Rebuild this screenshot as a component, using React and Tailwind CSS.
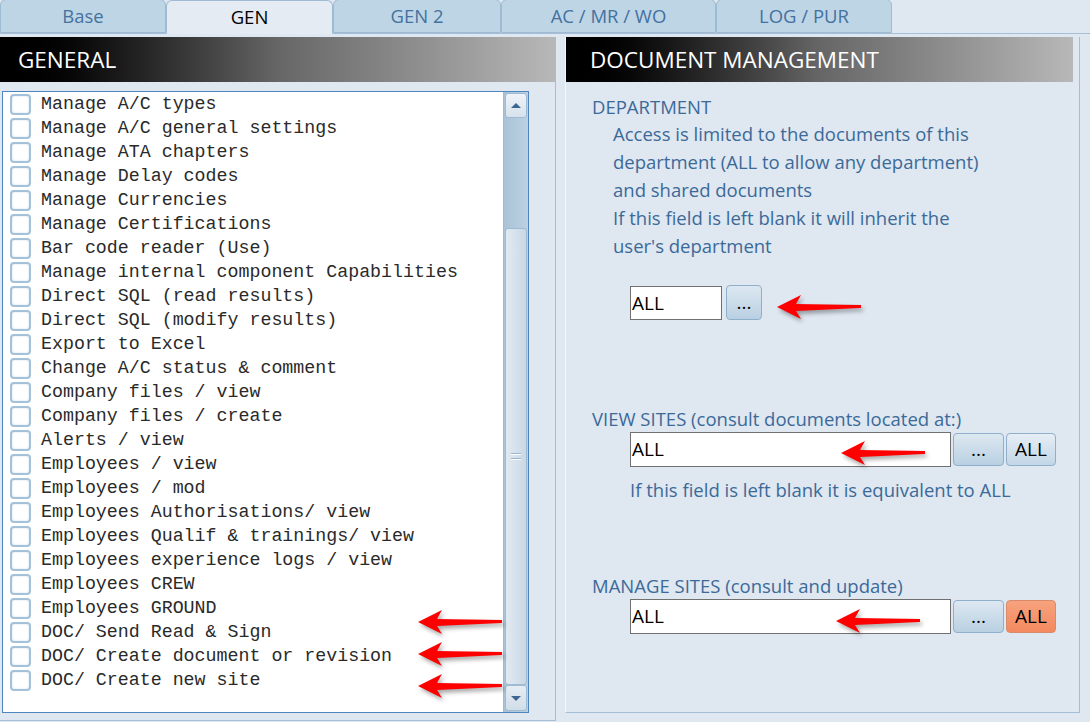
import React from "react";

const TABS = [
	{ label: "Base", width: "w-[166px]" },
	{ label: "GEN", width: "w-[167px]", active: true },
	{ label: "GEN 2", width: "w-[168px]" },
	{ label: "AC / MR / WO", width: "w-[215px]" },
	{ label: "LOG / PUR", width: "w-[176px]" },
];

const RIGHTS = [
	"Manage A/C types",
	"Manage A/C general settings",
	"Manage ATA chapters",
	"Manage Delay codes",
	"Manage Currencies",
	"Manage Certifications",
	"Bar code reader (Use)",
	"Manage internal component Capabilities",
	"Direct SQL (read results)",
	"Direct SQL (modify results)",
	"Export to Excel",
	"Change A/C status & comment",
	"Company files / view",
	"Company files / create",
	"Alerts / view",
	"Employees / view",
	"Employees / mod",
	"Employees Authorisations/ view",
	"Employees Qualif & trainings/ view",
	"Employees experience logs / view",
	"Employees CREW",
	"Employees GROUND",
	"DOC/ Send Read & Sign",
	"DOC/ Create document or revision",
	"DOC/ Create new site",
];

const UI_FONT = "font-['Open_Sans','Noto_Sans',sans-serif]";

// red pointer arrow, tip on the left
function Arrow({ className }) {
	return (
		<svg
			className={`absolute pointer-events-none drop-shadow-[2px_3px_2px_rgba(0,0,0,0.35)] ${className}`}
			width="84"
			height="26"
			viewBox="0 0 84 26"
		>
			<path d="M0 13 L24 1 L19 10 L84 11 L84 14 L19 17 L24 25 Z" fill="#ff0000" />
		</svg>
	);
}

function Tab({ label, width, active }) {
	return (
		<div
			className={`${width} h-[34px] flex items-center justify-center rounded-t-[6px] border border-[#9fbad3] text-[18.5px] ${UI_FONT} ${
				active
					? "bg-[#e4ebf3] text-black border-b-[#e4ebf3] -mb-px"
					: "bg-[#bed5e6] text-[#44729f] mt-px"
			}`}
		>
			{label}
		</div>
	);
}

function Header({ children }) {
	return (
		<div
			className={`h-[45px] flex items-center pl-[18px] text-white text-[22.5px] ${UI_FONT} bg-gradient-to-r from-black via-[#666666] to-[#b8b8b8]`}
		>
			{children}
		</div>
	);
}

function ScrollBar() {
	return (
		<div className="w-[25px] h-full flex flex-col bg-gradient-to-r from-[#aac3d8] to-[#bcd1e2] border-l border-[#9fbad3]">
			<div className="h-[25px] mx-px mt-px rounded-[3px] border border-[#9fbad3] bg-gradient-to-b from-[#eef3f8] to-[#d6e2ec] flex items-center justify-center">
				<div className="w-0 h-0 border-x-[5px] border-x-transparent border-b-[5px] border-b-[#3d6690]" />
			</div>
			<div className="h-[110px]" />
			<div className="flex-1 mx-px rounded-[3px] border border-[#9fbad3] bg-gradient-to-r from-[#e2eaf2] to-[#c9d8e5] flex items-center justify-center">
				<div className="flex flex-col gap-[3px]">
					<div className="w-[10px] h-[2px] bg-[#9ab6cf] border-b border-white" />
					<div className="w-[10px] h-[2px] bg-[#9ab6cf] border-b border-white" />
				</div>
			</div>
			<div className="h-[26px] mx-px mb-px rounded-[3px] border border-[#9fbad3] bg-gradient-to-b from-[#e6edf4] to-[#d0dde8] flex items-center justify-center">
				<div className="w-0 h-0 border-x-[5px] border-x-transparent border-t-[5px] border-t-[#3d6690]" />
			</div>
		</div>
	);
}

function SmallButton({ children, className }) {
	return (
		<button
			className={`rounded-[4px] border border-[#8fb0cc] text-[19px] text-black flex items-center justify-center ${UI_FONT} ${className}`}
		>
			{children}
		</button>
	);
}

function Field({ width }) {
	return (
		<div
			className={`${width} h-[35px] border border-[#707070] bg-white text-black text-[19px] leading-[33px] pl-[1px] ${UI_FONT}`}
		>
			ALL
		</div>
	);
}

export default function App() {
	return (
		<div className="relative w-[1090px] h-[722px] overflow-hidden bg-[#dfe7f0]">
			<div className="h-[34px] flex items-end border-b border-[#a6bfd6]">
				{TABS.map((t) => (
					<Tab key={t.label} {...t} />
				))}
			</div>

			<div className="flex mt-[3px]">
				{/* left side: general rights */}
				<div className="w-[556px] h-[684px] border-r border-b border-[#a6bed4] flex flex-col">
					<Header>GENERAL</Header>
					<div className="ml-[2px] mt-[9px] w-[527px] h-[622px] border border-[#4f86bd] bg-white flex">
						<div className="flex-1">
							{RIGHTS.map((r) => (
								<div key={r} className="h-[24px] flex items-center">
									<div className="ml-[7px] w-[21px] h-[21px] rounded-[4px] border-2 border-[#a3c1da] bg-white shrink-0 shadow-[inset_0_0_2px_#c8dbea]" />
									<span className="ml-[10px] mt-[1px] whitespace-pre text-[18.3px] leading-none text-[#2a2a2a] font-['Liberation_Mono','Courier_New',monospace]">
										{r}
									</span>
								</div>
							))}
						</div>
						<ScrollBar />
					</div>
				</div>

				{/* right side: document management */}
				<div className="ml-[9px] w-[515px] h-[676px] border-l border-l-[#f4f7fa] border-r border-b border-[#a6bed4] flex flex-col">
					<div className="w-[507px]">
						<Header>
							<span className="ml-[6px]">DOCUMENT MANAGEMENT</span>
						</Header>
					</div>
					<div className={`pl-[26px] text-[18.5px] text-[#3b6a99] ${UI_FONT}`}>
						<div className="mt-[12px] leading-[26px]">DEPARTMENT</div>
						<div className="pl-[21px] leading-[28px]">
							<div>Access is limited to the documents of this</div>
							<div>department (ALL to allow any department)</div>
							<div>and shared documents</div>
							<div>If this field is left blank it will inherit the</div>
							<div>user's department</div>
						</div>
						<div className="mt-[25px] pl-[38px] flex items-center gap-[4px]">
							<div className={`w-[92px] h-[34px] border border-[#707070] bg-white text-black text-[19px] leading-[32px] pl-[1px] ${UI_FONT}`}>
								ALL
							</div>
							<SmallButton className="w-[36px] h-[35px] bg-gradient-to-b from-[#dde8f1] to-[#b9d0e2] text-[15px]">
								...
							</SmallButton>
						</div>

						<div className="mt-[86px] leading-[26px]">VIEW SITES (consult documents located at:)</div>
						<div className="pl-[38px] flex items-center">
							<Field width="w-[321px]" />
							<SmallButton className="ml-[2px] w-[51px] h-[33px] bg-gradient-to-b from-[#dde8f1] to-[#b9d0e2] text-[15px]">
								...
							</SmallButton>
							<SmallButton className="ml-[2px] w-[50px] h-[33px] bg-gradient-to-b from-[#e6eef5] to-[#c2d6e6]">
								ALL
							</SmallButton>
						</div>
						<div className="pl-[38px] mt-[10px] leading-[26px]">
							If this field is left blank it is equivalent to ALL
						</div>

						<div className="mt-[70px] leading-[26px]">MANAGE SITES (consult and update)</div>
						<div className="pl-[38px] flex items-center">
							<Field width="w-[321px]" />
							<SmallButton className="ml-[2px] w-[51px] h-[33px] bg-gradient-to-b from-[#dde8f1] to-[#b9d0e2] text-[15px]">
								...
							</SmallButton>
							<SmallButton className="ml-[2px] w-[50px] h-[33px] bg-gradient-to-b from-[#f7a27e] to-[#f3895f] border-[#d98a6a]">
								ALL
							</SmallButton>
						</div>
					</div>
				</div>
			</div>

			<Arrow className="left-[418px] top-[609px]" />
			<Arrow className="left-[418px] top-[641px]" />
			<Arrow className="left-[418px] top-[673px]" />
			<Arrow className="left-[777px] top-[294px]" />
			<Arrow className="left-[841px] top-[440px]" />
			<Arrow className="left-[836px] top-[608px]" />
		</div>
	);
}
